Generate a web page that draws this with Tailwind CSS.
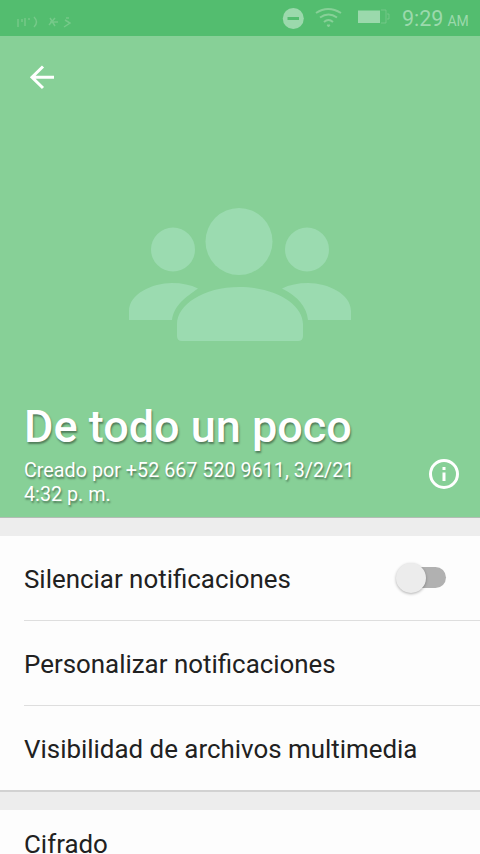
<!DOCTYPE html>
<html lang="es">
<head>
<meta charset="utf-8">
<title>De todo un poco</title>
<script src="https://cdn.jsdelivr.net/npm/@tailwindcss/browser@4"></script>
</head>
<body class="h-[854px] w-[480px] overflow-hidden bg-[#ededed] font-['Roboto',sans-serif] text-[#212121]">
<header class="flex h-[518px] flex-col border-b border-[#b3bdb5] bg-[#87d097]">
  <div class="flex h-9 shrink-0 items-center bg-[#53bd6f] text-[#9bd9ac]">
    <svg class="ml-4 mt-2 h-5 w-16" viewBox="0 0 64 20" fill="none" stroke="#87d097" stroke-opacity=".65" stroke-width="1.5">
      <path d="M2 7v8M6 7v3M9 14V6M12 7h2M18 5q5 5 0 10M34 6l5 8M39 6l-6 7M34 10h8M49 8l5 3-6 4M50 6h3"/>
    </svg>
    <svg class="ml-[202px] h-6 w-6 shrink-0" viewBox="0 0 24 24"><circle cx="11.3" cy="12.5" r="10.5" fill="#9bd9ac"/><path d="M5.500 12.500h11.500" stroke="#53bd6f" stroke-width="3"/></svg>
    <svg class="ml-2 h-6 w-8 shrink-0" viewBox="0 0 32 24" fill="none" stroke="#87d097" stroke-width="2"><path d="M2 7q12-8 25 0M6 11.500q8.500-6 17 0M10 16q4.500-4 9 0"/><path d="M13 19h3l-1.500 2z" fill="#87d097" stroke-width="1"/></svg>
    <svg class="ml-2.5 h-6 w-9 shrink-0" viewBox="0 0 36 24"><path d="M2 4.500h22v12.500H2z" fill="#9bd9ac"/><path d="M25 4h5v13h-5M31 8h2v5h-2" fill="none" stroke="#87d097" stroke-opacity=".6"/></svg>
    <div class="ml-[10px] mt-1 flex items-baseline whitespace-nowrap"><span class="text-[21.500px] leading-6">9:29</span><span class="ml-1 text-[14px] leading-6">AM</span></div>
  </div>
  <svg class="ml-[26px] mt-[25px] h-8 w-8 shrink-0" viewBox="0 0 32 32" fill="none" stroke="#fff" stroke-width="3"><path d="M28 16.300H6M17 5.500 6 16.300 17 27"/></svg>
  <svg class="ml-[120px] mt-[102px] h-[155px] w-60 shrink-0" viewBox="0 0 240 155" fill="#9bdbb0">
    <circle cx="119" cy="46.500" r="33.500"/><circle cx="53" cy="54.500" r="22"/><circle cx="187" cy="54.500" r="22"/>
    <path d="M57 141V129C57 110 83 92 119.500 92S183 110 183 129v12q0 5-5 5H62q-5 0-5-5zM9 125v-9C9 99 32 88 52 88q15 0 26 5.500C66 102 54 110 52 125zM231 125v-9C231 99 208 88 188 88q-15 0-26 5.500 24 12 26 31.500z"/>
  </svg>
  <div class="mt-[49px] px-6 text-white [text-shadow:1px_2px_2px_rgba(0,0,0,.4)]">
    <h1 class="whitespace-nowrap text-[45px] font-medium leading-[56px]">De todo un poco</h1>
    <div class="mt-[3px] flex items-start justify-between">
      <p class="whitespace-nowrap pt-px text-[19.75px] leading-6">Creado por +52 667 520 9611, 3/2/21<br>4:32 p. m.</p>
      <svg class="-mr-1 h-8 w-8 shrink-0" viewBox="0 0 32 32" fill="none" stroke="#fff" stroke-width="3"><circle cx="16" cy="16" r="13.500"/><path d="M16 14.500V23M16 9v3"/></svg>
    </div>
  </div>
</header>
<main class="mt-[18px] text-[25.9px] leading-8">
  <section class="h-[256px] border-b-2 border-[#d2d2d2] bg-[#fdfdfd] pl-6">
    <div class="flex h-[85px] items-center justify-between border-b border-[#dedede] pr-[34px]">
      <span class="whitespace-nowrap pt-0.5">Silenciar notificaciones</span>
      <span class="relative flex h-8 w-[54px] items-center justify-end pb-0.5"><span class="h-[21px] w-10 rounded-full bg-[#b1b1b1]"></span><span class="absolute left-1 top-px size-[30px] rounded-full bg-[#ececec] shadow-[0_1px_3px_rgba(0,0,0,.3)]"></span></span>
    </div>
    <div class="flex h-[85px] items-center whitespace-nowrap border-b border-[#dedede] pt-0.5">Personalizar notificaciones</div>
    <div class="flex h-[84px] items-center whitespace-nowrap pt-0.5">Visibilidad de archivos multimedia</div>
  </section>
  <section class="mt-[18px] h-[44px] bg-[#fdfdfd] px-6 pt-[18px]">Cifrado</section>
</main>
</body>
</html>
